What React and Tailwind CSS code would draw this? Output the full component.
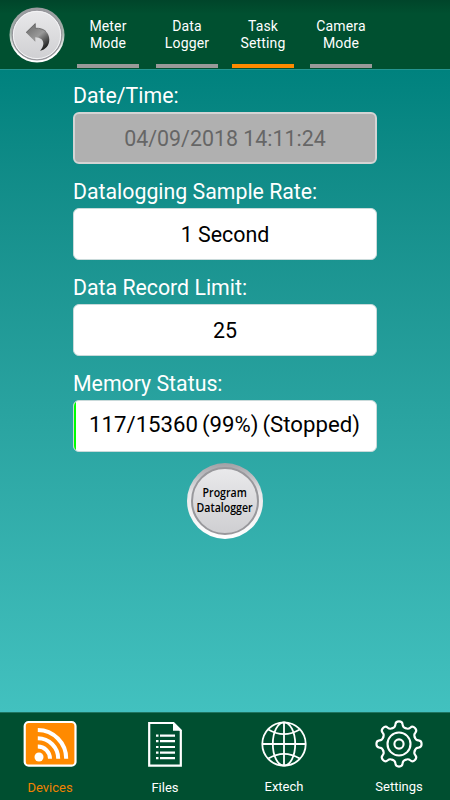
import React from 'react';

const TABS = [
  { top: 'Meter', bottom: 'Mode', margin: 'ml-[12px]' },
  { top: 'Data', bottom: 'Logger', margin: 'ml-[17px]' },
  { top: 'Task', bottom: 'Setting', margin: 'ml-[14px]', active: true },
  { top: 'Camera', bottom: 'Mode', margin: 'ml-[16px]' },
];

const BackButton = () => (
  <button className="ml-[9px] mt-[7px] h-14 w-14 shrink-0">
    <svg viewBox="0 0 56 56" className="h-14 w-14">
      <defs>
        <linearGradient id="backRim" x1="0" y1="0" x2="0" y2="1">
          <stop offset="0" stopColor="#9a9a9f" />
          <stop offset="0.45" stopColor="#a3b5ac" />
          <stop offset="0.8" stopColor="#ffffff" />
          <stop offset="1" stopColor="#ffffff" />
        </linearGradient>
        <linearGradient id="backFace" x1="0" y1="0" x2="0" y2="1">
          <stop offset="0" stopColor="#e9e9eb" />
          <stop offset="1" stopColor="#cfcfd2" />
        </linearGradient>
        <linearGradient id="backArrow" x1="0" y1="0" x2="0.7" y2="1">
          <stop offset="0" stopColor="#666" />
          <stop offset="0.55" stopColor="#999" />
          <stop offset="1" stopColor="#1c1c1c" />
        </linearGradient>
      </defs>
      <circle cx="28" cy="28" r="27.5" fill="url(#backRim)" />
      <circle cx="28" cy="28" r="24.8" fill="url(#backFace)" stroke="#97979c" strokeWidth="1.3" />
      <circle cx="28" cy="28" r="23.6" fill="none" stroke="#f3f3f5" strokeWidth="1" />
      <path d="M17 25.6 L26.3 16.5 V21.2 C34.5 20.8 40.3 25 40.3 32.5 C40.3 38.5 36.5 42.8 31 43.8 C35.5 39.5 37 31 26.3 30.3 V34.8 Z" fill="url(#backArrow)" />
      <path d="M17 25.6 L26.3 16.5 V21.2 C31 21 34.7 22.3 37 24.5" fill="none" stroke="#444" strokeWidth="0.6" />
    </svg>
  </button>
);

const Field = ({ label, disabled, children }) => (
  <div className="h-24">
    <div className="flex h-[32px] items-center whitespace-nowrap text-[21.3px] leading-[26px] text-white">{label}</div>
    <div className={`flex h-[52px] items-center justify-center overflow-hidden whitespace-nowrap rounded-md border text-[21.4px] ${disabled ? 'border-2 border-[#d4d4d4] bg-[#b0b0b0] pt-[3px] text-[#666]' : 'border-[#c9dada] bg-white pt-[3px] text-black'}`}>
      {children}
    </div>
  </div>
);

const DevicesIcon = () => (
  <svg width="54" height="48" viewBox="0 0 54 48">
    <rect x="1.7" y="2" width="50.8" height="43.7" rx="4" fill="#ff8a00" stroke="#fff" strokeWidth="2.2" />
    <circle cx="16" cy="37" r="4.5" fill="#fff" />
    <path d="M14.8 26.5 A12.2 12.2 0 0 1 27 38.7 M14.8 18.3 A20.4 20.4 0 0 1 35.2 38.7 M14.8 10 A28.7 28.7 0 0 1 43.2 38.7" fill="none" stroke="#fff" strokeWidth="4" />
  </svg>
);

const FilesIcon = () => (
  <svg width="36" height="48" viewBox="0 0 36 48">
    <path d="M2.2 3 H26.5 L33.8 10.5 V45.7 H2.2 Z" fill="none" stroke="#fff" strokeWidth="2.2" />
    <path d="M26 2 V10.8 H34.8 Z" fill="#fff" />
    {[15.7, 21.2, 27, 32.6, 38.2].map((y) => (
      <path key={y} d={`M9 ${y} H11.5 M13 ${y} H28`} stroke="#fff" strokeWidth="2.2" />
    ))}
  </svg>
);

const GlobeIcon = () => (
  <svg width="48" height="48" viewBox="0 0 48 48" fill="none" stroke="#fff" strokeWidth="1.8">
    <circle cx="24" cy="24" r="21.7" />
    <ellipse cx="24" cy="24" rx="11.2" ry="21.7" />
    <path d="M2.3 24 H45.7 M24 2.3 V45.7" />
    <path d="M8.3 9.5 Q24 18.8 39.7 9.5 M8.3 38.5 Q24 29.2 39.7 38.5" />
  </svg>
);

// one tooth of the gear, pointing up; it is turned round the centre eight times
const TOOTH = 'M17.4 8.2 Q20.3 7.2 20.4 4.5 Q20.6 1.4 24 1.4 Q27.4 1.4 27.6 4.5 Q27.7 7.2 30.6 8.2';

const GearIcon = () => (
  <svg width="48" height="48" viewBox="0 0 48 48" fill="none" stroke="#fff" strokeWidth="2.1" strokeLinecap="round">
    {[0, 45, 90, 135, 180, 225, 270, 315].map((a) => (
      <path key={a} d={TOOTH} transform={`rotate(${a} 24 24)`} />
    ))}
    <circle cx="24" cy="24" r="11.5" />
    <circle cx="24" cy="24" r="4.6" />
  </svg>
);

const NavItem = ({ icon, label, className }) => (
  <button className={`flex flex-col items-center text-[13px] leading-4 ${className}`}>
    <span className="block h-12">{icon}</span>
    {label}
  </button>
);

const App = () => {
  return (
    <div className="flex h-[800px] w-[450px] flex-col overflow-hidden bg-[#004f30] font-['Roboto',sans-serif]">
      {/* Header */}
      <header className="flex h-[69px] shrink-0 bg-linear-to-b from-[#00452a] to-[#005030] to-20%">
        <BackButton />
        <nav className="flex">
          {TABS.map((tab) => (
            <button
              key={tab.top}
              className={`flex h-[68px] w-[62px] flex-col items-center border-b-4 pt-[18px] text-[14px] leading-[17px] tracking-[0.15px] text-white ${tab.margin} ${tab.active ? 'border-[#ff8a00]' : 'border-[#999]'}`}
            >
              <span>{tab.top}</span>
              <span>{tab.bottom}</span>
            </button>
          ))}
        </nav>
      </header>

      {/* Task settings */}
      <main className="flex h-[643px] shrink-0 flex-col border-t border-[#249590] bg-linear-to-b from-[#00827e] to-[#42c1bf] px-[73px] pt-[10px]">
        <Field label="Date/Time:" disabled>04/09/2018 14:11:24</Field>
        <Field label="Datalogging Sample Rate:">1 Second</Field>
        <Field label="Data Record Limit:">25</Field>
        <Field label="Memory Status:">
          <div className="-mt-[3px] flex h-[50px] w-full shrink-0 items-center justify-center gap-1 border-l-2 border-[#00ff00] pb-[3px] pr-[3px] text-[22.2px]">
            <span>117/15360</span>
            <span>(99%)</span>
            <span>(Stopped)</span>
          </div>
        </Field>

        <button className="-mt-px h-[76px] w-[76px] shrink-0 self-center rounded-full bg-linear-to-b from-[#a0a0a5] via-[#e8e8ea] via-40% to-white p-[4px]">
          <span className="flex h-full w-full flex-col items-center justify-center rounded-full border-2 border-[#98989c] bg-linear-to-b from-[#e9e9eb] to-[#cfcfd2] pb-0.5 font-['Open_Sans',sans-serif] text-[12.3px] font-semibold leading-[15px] text-black">
            <span className="scale-x-[0.86]">Program</span>
            <span className="scale-x-[0.86]">Datalogger</span>
          </span>
        </button>
      </main>

      {/* Bottom bar */}
      <footer className="flex h-[88px] border-t border-[#1f7560] pt-[7px] text-white">
        <NavItem icon={<DevicesIcon />} label="Devices" className="w-[100px] gap-3 text-[#f08200]" />
        <NavItem icon={<FilesIcon />} label="Files" className="ml-[15px] w-[100px] gap-3" />
        <NavItem icon={<GlobeIcon />} label="Extech" className="ml-[19px] w-[100px] gap-[11px]" />
        <NavItem icon={<GearIcon />} label="Settings" className="ml-[15px] w-[100px] gap-[11px]" />
      </footer>
    </div>
  );
};

export default App;
